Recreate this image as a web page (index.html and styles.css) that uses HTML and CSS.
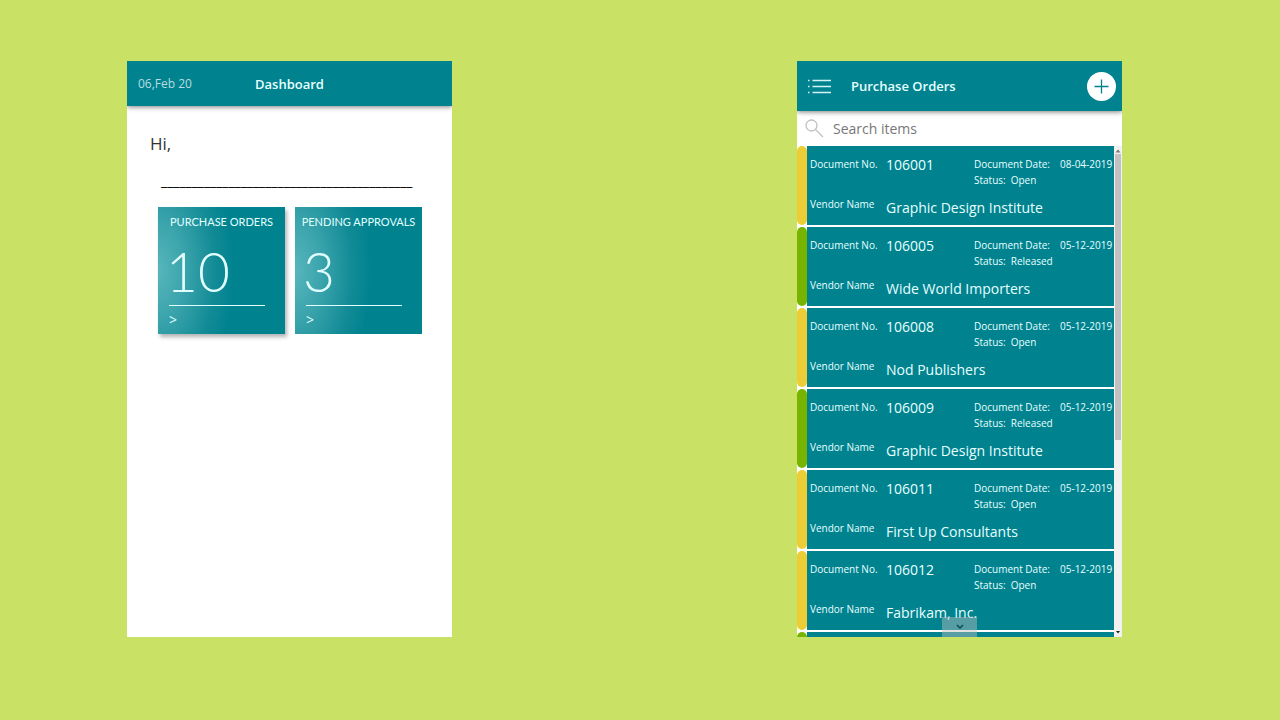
FILE: index.html
```html
<!DOCTYPE html>
<html lang="en">
<head>
    <meta charset="UTF-8">
    <meta name="viewport" content="width=device-width, initial-scale=1.0">
    <title>Purchase Orders</title>
    <link rel="stylesheet" href="styles.css">
</head>
<body>
    <section class="screen">
        <header class="bar dashboard-bar">
            <span class="date">06,Feb 20</span>
            <h1>Dashboard</h1>
        </header>
        <div class="dashboard">
            <p class="greeting">Hi,</p>
            <div class="divider">_________________________________________</div>
            <div class="tiles">
                <button class="tile tile-raised">
                    <span class="tile-title">PURCHASE ORDERS</span>
                    <span class="tile-count">10</span>
                    <span class="tile-more">&gt;</span>
                </button>
                <button class="tile">
                    <span class="tile-title">PENDING APPROVALS</span>
                    <span class="tile-count">3</span>
                    <span class="tile-more">&gt;</span>
                </button>
            </div>
        </div>
    </section>

    <section class="screen">
        <header class="bar orders-bar">
            <button class="icon-button" aria-label="Menu">
                <svg width="24" height="16" viewBox="0 0 24 16" stroke="#d5f3f5" stroke-width="1.4">
                    <path d="M0 2.5h1.500M4.500 2.500H23M0 8.500h1.500M4.500 8.500H23M0 14.500h1.500M4.500 14.500H23"/>
                </svg>
            </button>
            <h1>Purchase Orders</h1>
            <button class="add-button" aria-label="Add order">
                <svg width="15" height="15" viewBox="0 0 15 15" stroke="#00838f" stroke-width="1.3">
                    <path d="M0.500 7.500H14.500M7.500 0.500V14.500"/>
                </svg>
            </button>
        </header>
        <label class="search">
            <svg width="20" height="20" viewBox="0 0 20 20" fill="none" stroke="#c0c0c0" stroke-width="1.3">
                <circle cx="6.500" cy="6.500" r="5.500"/>
                <path d="M10.500 10.500L18 18"/>
            </svg>
            <input type="text" placeholder="Search items" aria-label="Search items">
        </label>
        <div class="list">
            <div class="orders">
                <article class="order open">
                    <span class="label">Document No.</span>
                    <span class="value">106001</span>
                    <div class="info"><div class="doc-date"><span>Document Date:</span><span>08-04-2019</span></div><div class="status"><span>Status:</span><span>Open</span></div></div>
                    <span class="label">Vendor Name</span>
                    <span class="value vendor">Graphic Design Institute</span>
                </article>
                <article class="order released">
                    <span class="label">Document No.</span>
                    <span class="value">106005</span>
                    <div class="info"><div class="doc-date"><span>Document Date:</span><span>05-12-2019</span></div><div class="status"><span>Status:</span><span>Released</span></div></div>
                    <span class="label">Vendor Name</span>
                    <span class="value vendor">Wide World Importers</span>
                </article>
                <article class="order open">
                    <span class="label">Document No.</span>
                    <span class="value">106008</span>
                    <div class="info"><div class="doc-date"><span>Document Date:</span><span>05-12-2019</span></div><div class="status"><span>Status:</span><span>Open</span></div></div>
                    <span class="label">Vendor Name</span>
                    <span class="value vendor">Nod Publishers</span>
                </article>
                <article class="order released">
                    <span class="label">Document No.</span>
                    <span class="value">106009</span>
                    <div class="info"><div class="doc-date"><span>Document Date:</span><span>05-12-2019</span></div><div class="status"><span>Status:</span><span>Released</span></div></div>
                    <span class="label">Vendor Name</span>
                    <span class="value vendor">Graphic Design Institute</span>
                </article>
                <article class="order open">
                    <span class="label">Document No.</span>
                    <span class="value">106011</span>
                    <div class="info"><div class="doc-date"><span>Document Date:</span><span>05-12-2019</span></div><div class="status"><span>Status:</span><span>Open</span></div></div>
                    <span class="label">Vendor Name</span>
                    <span class="value vendor">First Up Consultants</span>
                </article>
                <article class="order open">
                    <span class="label">Document No.</span>
                    <span class="value">106012</span>
                    <div class="info"><div class="doc-date"><span>Document Date:</span><span>05-12-2019</span></div><div class="status"><span>Status:</span><span>Open</span></div></div>
                    <span class="label">Vendor Name</span>
                    <span class="value vendor">Fabrikam, Inc.</span>
                </article>
                <article class="order released"></article>
            </div>
            <div class="scrollbar">
                <svg width="6" height="4" viewBox="0 0 6 4"><path d="M3 0.500L5.500 3.500H0.500z" fill="#777"/></svg>
                <div class="thumb"></div>
                <svg width="6" height="4" viewBox="0 0 6 4"><path d="M3 3.500L1 1H5z" fill="#222"/></svg>
            </div>
            <button class="scroll-down" aria-label="Scroll down">
                <svg width="8" height="6" viewBox="0 0 8 6" fill="none" stroke="#064b52" stroke-width="1.500"><path d="M1 1L4 4L7 1"/></svg>
            </button>
        </div>
    </section>
</body>
</html>
```
FILE: styles.css
```css
* {
    box-sizing: border-box;
}

body {
    margin: 0;
    min-height: 100vh;
    padding: 61px 158px 83px 127px;
    display: flex;
    justify-content: space-between;
    gap: 24px;
    background-color: #c9e265;
    font-family: "Open Sans", sans-serif;
}

button {
    padding: 0;
    border: none;
    background: none;
    font: inherit;
    color: inherit;
    cursor: pointer;
}

svg {
    display: block;
}

.screen {
    flex: 0 1 325px;
    height: calc(100vh - 144px);
    display: flex;
    flex-direction: column;
    overflow: hidden;
    background-color: #fff;
}

.bar {
    flex: none;
    display: flex;
    align-items: center;
    background-color: #00838f;
    box-shadow: 0 1px 5px rgba(0, 0, 0, 0.5);
    color: #e8ffff;
}

.bar h1 {
    margin: 0;
    font-size: 13px;
    font-weight: 600;
}

/* Dashboard */
.dashboard-bar {
    height: 45px;
    display: grid;
    grid-template-columns: 1fr auto 1fr;
    padding: 0 11px;
}

.date {
    font-size: 12px;
    color: #b9dde0;
}

.dashboard {
    padding: 26px 30px 26px 23px;
}

.greeting {
    margin: 0;
    font-size: 17px;
    line-height: 24px;
    color: #333;
}

.divider {
    margin-top: 15px;
    padding-left: 11px;
    font-size: 14px;
    line-height: 20px;
}

.tiles {
    display: flex;
    gap: 10px;
    margin-top: 16px;
    padding-left: 8px;
}

.tile {
    flex: 1;
    height: 127px;
    display: flex;
    flex-direction: column;
    background: radial-gradient(ellipse 76px 140px at 0 50%, #58b6bc, #3ba4ac 35%, #128b96 75%, #00838f);
    color: #e2ffff;
    font-family: Lato, sans-serif;
    text-align: left;
}

.tile-raised {
    box-shadow: 2px 3px 4px rgba(0, 0, 0, 0.3);
}

.tile-title {
    align-self: center;
    margin-top: 7px;
    font-size: 11px;
    line-height: 16px;
    white-space: nowrap;
}

.tile-count {
    margin: 9px 0 0 8px;
    font-size: 55px;
    font-weight: 300;
    line-height: 64px;
}

.tile-more {
    margin: 2px 20px 0 11px;
    border-top: 1px solid #e2ffff;
    padding-top: 4px;
    font: 14px/20px "Open Sans", sans-serif;
}

/* Purchase orders */
.orders-bar {
    height: 50px;
    padding: 0 6px 0 11px;
}

.orders-bar h1 {
    margin-left: 19px;
}

.add-button {
    width: 29px;
    height: 29px;
    margin-left: auto;
    border-radius: 50%;
    background-color: #fff;
    display: grid;
    place-items: center;
}

.search {
    flex: none;
    height: 35px;
    display: flex;
    align-items: center;
    gap: 8px;
    padding-left: 8px;
}

.search input {
    flex: 1;
    min-width: 0;
    padding: 0;
    border: none;
    outline: none;
    background: none;
    font: 14px "Open Sans", sans-serif;
}

.search input::placeholder {
    color: #777;
}

.list {
    position: relative;
    flex: 1;
    min-height: 0;
    display: flex;
    overflow: hidden;
}

.orders {
    flex: 1;
    min-width: 0;
    display: flex;
    flex-direction: column;
    gap: 2px;
}

.order {
    position: relative;
    flex: none;
    height: 79px;
    margin-left: 10px;
    padding: 8px 0 0 3px;
    display: grid;
    grid-template-columns: 76px 88px 1fr;
    grid-template-rows: 40px 28px;
    background-color: #00838f;
    color: #e8ffff;
    font-size: 10px;
    line-height: 20px;
}

/* status stripe on the left */
.order::before {
    content: "";
    position: absolute;
    left: -10px;
    top: 0;
    width: 10px;
    height: 100%;
    border-radius: 5px;
}

.open::before {
    background-color: #eccd35;
}

.released::before {
    background-color: #76b400;
}

.label {
    white-space: nowrap;
}

.value {
    font-size: 14px;
    line-height: 22px;
}

.vendor {
    grid-column: span 2;
    line-height: 28px;
}

.info {
    line-height: 16px;
    white-space: nowrap;
    padding-top: 2px;
}

.doc-date {
    display: flex;
    gap: 10px;
}

.status {
    display: flex;
    gap: 5px;
}

.scrollbar {
    width: 8px;
    padding: 3px 1px;
    display: flex;
    flex-direction: column;
    background-color: #f1f1f1;
}

.thumb {
    height: 59%;
    margin: 1px 0 auto;
    background-color: #c1c1c1;
}

.scroll-down {
    position: absolute;
    left: 145px;
    bottom: 0;
    width: 35px;
    height: 20px;
    display: grid;
    place-items: center;
    background-color: rgba(190, 190, 190, 0.45);
}
```
